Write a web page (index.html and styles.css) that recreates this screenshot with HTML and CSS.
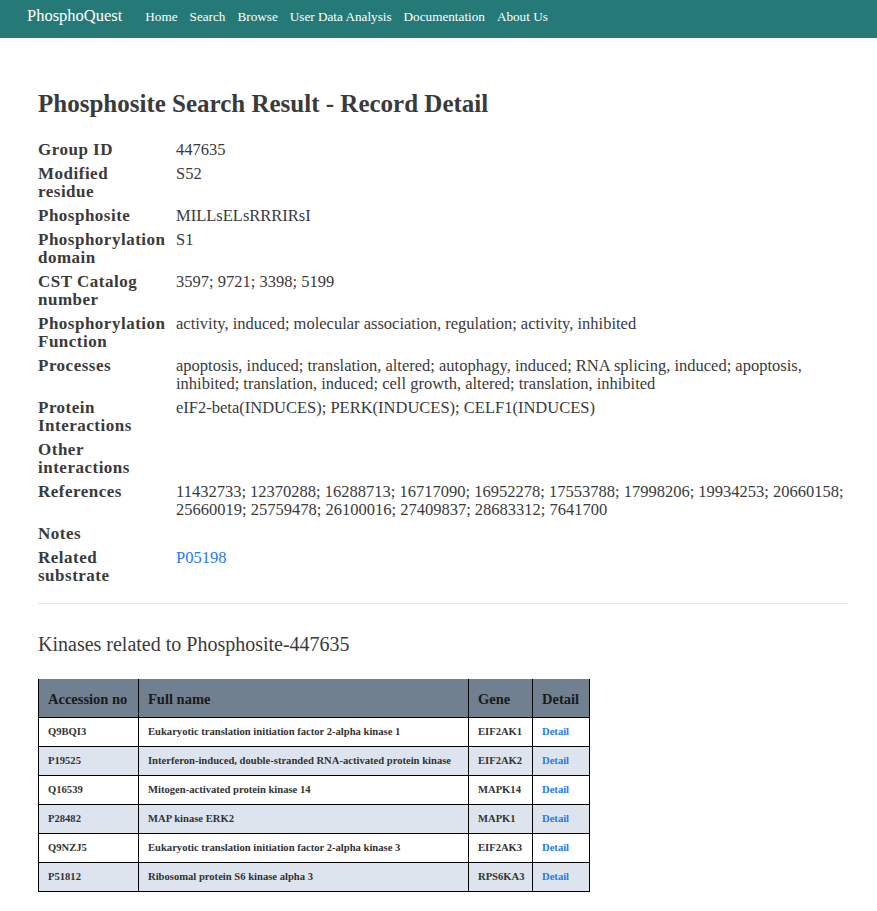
FILE: index.html
```html
<!DOCTYPE html>
<html>
<head>
<meta charset="utf-8">
<link rel="stylesheet" href="styles.css">
</head>
<body>
<nav class="topbar">
  <a class="brand" href="#">PhosphoQuest</a>
  <ul class="nav">
    <li><a href="#">Home</a></li>
    <li><a href="#">Search</a></li>
    <li><a href="#">Browse</a></li>
    <li><a href="#">User Data Analysis</a></li>
    <li><a href="#">Documentation</a></li>
    <li><a href="#">About Us</a></li>
  </ul>
</nav>
<main class="container">
  <h1 class="title">Phosphosite Search Result - Record Detail</h1>
  <dl class="record">
    <dt>Group ID</dt><dd>447635</dd>
    <dt>Modified residue</dt><dd>S52</dd>
    <dt>Phosphosite</dt><dd>MILLsELsRRRIRsI</dd>
    <dt>Phosphorylation domain</dt><dd>S1</dd>
    <dt>CST Catalog number</dt><dd>3597; 9721; 3398; 5199</dd>
    <dt>Phosphorylation Function</dt><dd>activity, induced; molecular association, regulation; activity, inhibited</dd>
    <dt>Processes</dt><dd>apoptosis, induced; translation, altered; autophagy, induced; RNA splicing, induced; apoptosis, inhibited; translation, induced; cell growth, altered; translation, inhibited</dd>
    <dt>Protein Interactions</dt><dd>eIF2-beta(INDUCES); PERK(INDUCES); CELF1(INDUCES)</dd>
    <dt>Other interactions</dt><dd></dd>
    <dt>References</dt><dd>11432733; 12370288; 16288713; 16717090; 16952278; 17553788; 17998206; 19934253; 20660158; 25660019; 25759478; 26100016; 27409837; 28683312; 7641700</dd>
    <dt>Notes</dt><dd></dd>
    <dt>Related substrate</dt><dd><a href="#">P05198</a></dd>
  </dl>
  <hr class="divider">
  <h2 class="subtitle">Kinases related to Phosphosite-447635</h2>
  <table class="kinases">
    <colgroup>
      <col class="c-acc"><col class="c-name"><col class="c-gene"><col class="c-det">
    </colgroup>
    <thead>
      <tr><th>Accession no</th><th>Full name</th><th>Gene</th><th>Detail</th></tr>
    </thead>
    <tbody>
      <tr><td>Q9BQI3</td><td>Eukaryotic translation initiation factor 2-alpha kinase 1</td><td>EIF2AK1</td><td><a href="#">Detail</a></td></tr>
      <tr><td>P19525</td><td>Interferon-induced, double-stranded RNA-activated protein kinase</td><td>EIF2AK2</td><td><a href="#">Detail</a></td></tr>
      <tr><td>Q16539</td><td>Mitogen-activated protein kinase 14</td><td>MAPK14</td><td><a href="#">Detail</a></td></tr>
      <tr><td>P28482</td><td>MAP kinase ERK2</td><td>MAPK1</td><td><a href="#">Detail</a></td></tr>
      <tr><td>Q9NZJ5</td><td>Eukaryotic translation initiation factor 2-alpha kinase 3</td><td>EIF2AK3</td><td><a href="#">Detail</a></td></tr>
      <tr><td>P51812</td><td>Ribosomal protein S6 kinase alpha 3</td><td>RPS6KA3</td><td><a href="#">Detail</a></td></tr>
    </tbody>
  </table>
</main>
</body>
</html>
```
FILE: styles.css
```css
* { box-sizing: border-box; }
body {
  margin: 0;
  font-family: "Liberation Serif", "DejaVu Serif", serif;
  color: #333;
  background: #fff;
}
a { color: #1e7bf0; text-decoration: none; }

.topbar {
  background: #257a78;
  height: 38px;
  display: flex;
  align-items: center;
  padding-left: 27px;
  padding-bottom: 6px;
}
.brand {
  color: #fff;
  font-size: 16.5px;
  margin-right: 23px;
}
.nav {
  list-style: none;
  margin: 0;
  padding: 0;
  display: flex;
  gap: 12px;
}
.nav a {
  color: #fff;
  font-size: 13.2px;
}

.container {
  margin: 0 29px 0 38px;
  padding-top: 52px;
  padding-bottom: 20px;
}
.title {
  margin: 0 0 23px;
  font-size: 25px;
  font-weight: bold;
  line-height: 28px;
  color: #3a3a3a;
}
.record {
  display: grid;
  grid-template-columns: 138px 1fr;
  row-gap: 6px;
  margin: 0;
  font-size: 16.5px;
  line-height: 18px;
}
.record dt {
  font-weight: bold;
  font-size: 17px;
  letter-spacing: 0.5px;
  color: #3a3a3a;
  width: 129px;
}
.record dd {
  margin: 0;
  color: #3a3a3a;
}
.divider {
  border: 0;
  border-top: 1px solid #e6e6e6;
  margin: 18px 0 26px;
}
.subtitle {
  font-weight: normal;
  font-size: 20px;
  margin: 0 0 21px;
  line-height: 28px;
  color: #3a3a3a;
}
.kinases {
  border-collapse: collapse;
  table-layout: fixed;
  width: 551px;
}
.c-acc { width: 100px; }
.c-name { width: 330px; }
.c-gene { width: 64px; }
.c-det { width: 57px; }
.kinases th {
  background: #708090;
  color: #1a1a1a;
  font-size: 14.5px;
  text-align: left;
  height: 38px;
  padding: 3px 9px 0;
  border-left: 1px solid #000;
  border-right: 1px solid #000;
}
.kinases td {
  font-size: 10.6px;
  font-weight: bold;
  color: #333;
  height: 29px;
  padding: 0 9px;
  border: 1px solid #000;
  white-space: nowrap;
}
.kinases tbody tr:nth-child(even) td { background: #dde4ee; }
```
